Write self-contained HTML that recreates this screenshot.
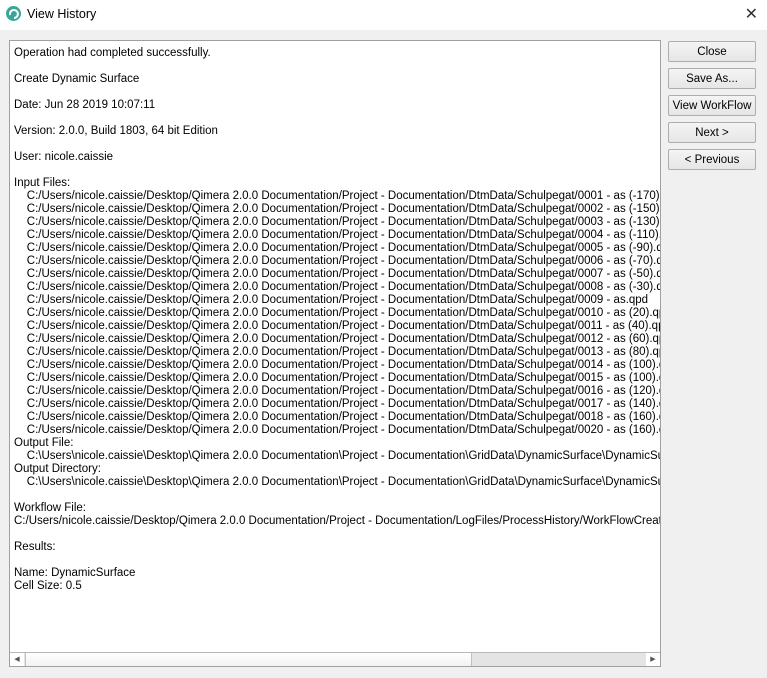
<!DOCTYPE html>
<html><head><style>
body{margin:0;width:767px;height:678px;background:#f0f0f0;font-family:"Liberation Sans",sans-serif;position:relative;overflow:hidden}
.title{position:absolute;left:0;top:0;width:767px;height:30px;background:#fff}
.title span{position:absolute;left:27px;top:7px;font-size:12.5px;color:#000}
.x{position:absolute;right:9px;top:4px;font-size:16px;color:#333}
.box{position:absolute;left:9px;top:40px;width:650px;height:625px;border:1px solid #a0a0a0;background:#fff;overflow:hidden}
.txt{position:absolute;left:4px;top:6px;font-size:11.5px;line-height:13px;color:#000;white-space:pre}
.sb{position:absolute;left:0;top:611px;width:650px;height:14px;border-top:1px solid #b8b8b8;background:#e4e4e4}
.thumb{position:absolute;left:15px;top:0;width:445px;height:13px;background:linear-gradient(#fff,#f2f2f2);border-left:1px solid #c0c0c0;border-right:1px solid #c0c0c0}
.arr{position:absolute;top:0;width:14px;height:14px;background:#fff;font-size:7px;line-height:14px;text-align:center;color:#555}
.btn{position:absolute;left:668px;width:86px;height:19px;border:1px solid #adadad;border-radius:2px;background:linear-gradient(#f4f4f4,#e6e6e6);font-size:11.5px;text-align:center;line-height:21px;color:#000}
</style></head><body>
<div class="title">
<svg style="position:absolute;left:6px;top:6px" width="15" height="15" viewBox="0 0 15 15"><circle cx="7.5" cy="7.5" r="7.5" fill="#3aa59a"/><path d="M4 9a4 4 0 1 1 4 3" stroke="#fff" stroke-width="2" fill="none"/></svg>
<span>View History</span><div class="x">✕</div></div>
<div class="box"><div class="txt">Operation had completed successfully.

Create Dynamic Surface

Date: Jun 28 2019 10:07:11

Version: 2.0.0, Build 1803, 64 bit Edition

User: nicole.caissie

Input Files:
    C:/Users/nicole.caissie/Desktop/Qimera 2.0.0 Documentation/Project - Documentation/DtmData/Schulpegat/0001 - as (-170).qpd
    C:/Users/nicole.caissie/Desktop/Qimera 2.0.0 Documentation/Project - Documentation/DtmData/Schulpegat/0002 - as (-150).qpd
    C:/Users/nicole.caissie/Desktop/Qimera 2.0.0 Documentation/Project - Documentation/DtmData/Schulpegat/0003 - as (-130).qpd
    C:/Users/nicole.caissie/Desktop/Qimera 2.0.0 Documentation/Project - Documentation/DtmData/Schulpegat/0004 - as (-110).qpd
    C:/Users/nicole.caissie/Desktop/Qimera 2.0.0 Documentation/Project - Documentation/DtmData/Schulpegat/0005 - as (-90).qpd
    C:/Users/nicole.caissie/Desktop/Qimera 2.0.0 Documentation/Project - Documentation/DtmData/Schulpegat/0006 - as (-70).qpd
    C:/Users/nicole.caissie/Desktop/Qimera 2.0.0 Documentation/Project - Documentation/DtmData/Schulpegat/0007 - as (-50).qpd
    C:/Users/nicole.caissie/Desktop/Qimera 2.0.0 Documentation/Project - Documentation/DtmData/Schulpegat/0008 - as (-30).qpd
    C:/Users/nicole.caissie/Desktop/Qimera 2.0.0 Documentation/Project - Documentation/DtmData/Schulpegat/0009 - as.qpd
    C:/Users/nicole.caissie/Desktop/Qimera 2.0.0 Documentation/Project - Documentation/DtmData/Schulpegat/0010 - as (20).qpd
    C:/Users/nicole.caissie/Desktop/Qimera 2.0.0 Documentation/Project - Documentation/DtmData/Schulpegat/0011 - as (40).qpd
    C:/Users/nicole.caissie/Desktop/Qimera 2.0.0 Documentation/Project - Documentation/DtmData/Schulpegat/0012 - as (60).qpd
    C:/Users/nicole.caissie/Desktop/Qimera 2.0.0 Documentation/Project - Documentation/DtmData/Schulpegat/0013 - as (80).qpd
    C:/Users/nicole.caissie/Desktop/Qimera 2.0.0 Documentation/Project - Documentation/DtmData/Schulpegat/0014 - as (100).qpd
    C:/Users/nicole.caissie/Desktop/Qimera 2.0.0 Documentation/Project - Documentation/DtmData/Schulpegat/0015 - as (100).qpd
    C:/Users/nicole.caissie/Desktop/Qimera 2.0.0 Documentation/Project - Documentation/DtmData/Schulpegat/0016 - as (120).qpd
    C:/Users/nicole.caissie/Desktop/Qimera 2.0.0 Documentation/Project - Documentation/DtmData/Schulpegat/0017 - as (140).qpd
    C:/Users/nicole.caissie/Desktop/Qimera 2.0.0 Documentation/Project - Documentation/DtmData/Schulpegat/0018 - as (160).qpd
    C:/Users/nicole.caissie/Desktop/Qimera 2.0.0 Documentation/Project - Documentation/DtmData/Schulpegat/0020 - as (160).qpd
Output File:
    C:\Users\nicole.caissie\Desktop\Qimera 2.0.0 Documentation\Project - Documentation\GridData\DynamicSurface\DynamicSurface.sd
Output Directory:
    C:\Users\nicole.caissie\Desktop\Qimera 2.0.0 Documentation\Project - Documentation\GridData\DynamicSurface\DynamicSurface

Workflow File:
C:/Users/nicole.caissie/Desktop/Qimera 2.0.0 Documentation/Project - Documentation/LogFiles/ProcessHistory/WorkFlowCreate.xml

Results:

Name: DynamicSurface
Cell Size: 0.5</div>
<div class="sb"><div class="arr" style="left:0">◀</div><div class="thumb"></div><div class="arr" style="right:0">▶</div></div>
</div>
<div class="btn" style="top:41px">Close</div>
<div class="btn" style="top:68px">Save As...</div>
<div class="btn" style="top:95px">View WorkFlow</div>
<div class="btn" style="top:122px">Next &gt;</div>
<div class="btn" style="top:149px">&lt; Previous</div>
</body></html>
